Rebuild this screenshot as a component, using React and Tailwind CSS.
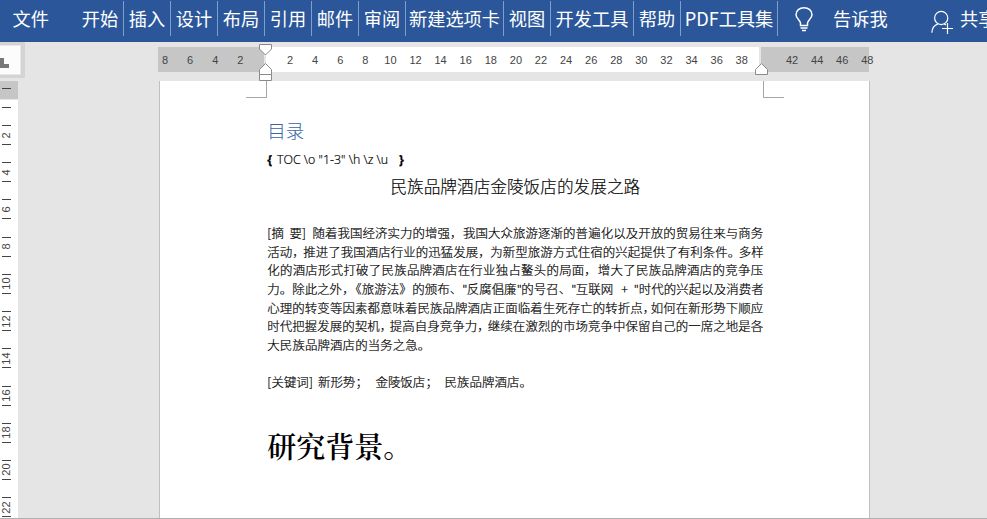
import React from 'react';

const tabs = [
  { name: '开始', w: 'w-[47px]' },
  { name: '插入', w: 'w-[47px]' },
  { name: '设计', w: 'w-[47px]' },
  { name: '布局', w: 'w-[47px]' },
  { name: '引用', w: 'w-[47px]' },
  { name: '邮件', w: 'w-[47px]' },
  { name: '审阅', w: 'w-[47px]' },
  { name: '新建选项卡', w: 'w-[98px]' },
  { name: '视图', w: 'w-[47px]' },
  { name: '开发工具', w: 'w-[83px]' },
  { name: '帮助', w: 'w-[47px]' },
  { name: 'PDF工具集', w: 'w-[97px]' },
];

const leftNums = [8, 6, 4, 2];
const midNums = [2, 4, 6, 8, 10, 12, 14, 16, 18, 20, 22, 24, 26, 28, 30, 32, 34, 36, 38];
const rightNums = [42, 44, 46, 48];
const sideNums = [2, 4, 6, 8, 10, 12, 14, 16, 18, 20, 22];

// each line is a list of [text, width in px]
const lines = [
  [['[', 4.2], ['摘', 18], ['要', 12.5], [']', 10.5], ['随着我国经济实力的增强', 137.5], ['，', 13], ['我国大众旅游逐渐的普遍化以及开放的贸易往来与商务', 300.3]],
  [['活动', 25], ['，', 11], ['推进了我国酒店行业的迅猛发展', 175], ['，', 12], ['为新型旅游方式住宿的兴起提供了有利条件', 237.5], ['。', 11], ['多样', 25]],
  [['化的酒店形式打破了民族品牌酒店在行业独占鳌头的局面', 317], ['，', 13.5], ['增大了民族品牌酒店的竞争压', 165.5]],
  [['力', 12.5], ['。', 12.5], ['除此之外', 50], ['，', 7], ['《', 12.5], ['旅游法', 37.5], ['》', 13], ['的颁布', 37.5], ['、', 12.5], ['"', 4.5], ['反腐倡廉', 50], ['"', 4.5], ['的号召', 37.5], ['、', 12.5], ['"', 4.5], ['互联网', 45.5], ['+', 12.5], ['"', 5], ['时代的兴起以及消费者', 125]],
  [['心理的转变等因素都意味着民族品牌酒店正面临着生死存亡的转折点', 375.5], ['，', 8], ['如何在新形势下顺应', 112.5]],
  [['时代把握发展的契机', 112.5], ['，', 10], ['提高自身竞争力', 87.5], ['，', 10.5], ['继续在激烈的市场竞争中保留自己的一席之地是各', 275.5]],
  [['大民族品牌酒店的当务之急', 150.5], ['。', 12.5]],
];

const keywords = [['[', 4.2], ['关键词', 37.5], [']', 9], ['新形势', 37.5], ['；', 20], ['金陵饭店', 50], ['；', 19], ['民族品牌酒店', 75], ['。', 12.5]];

function Line({ parts }) {
  return (
    <div className="flex h-[18.67px] items-center whitespace-nowrap">
      {parts.map(([text, width], i) => (
        <span
          key={i}
          className={`shrink-0 ${text.length > 4 ? '[text-align-last:justify]' : ''} ${'，；。'.includes(text) ? "[font-feature-settings:'halt']" : ''}`}
          style={{ width }}
        >
          {text}
        </span>
      ))}
    </div>
  );
}

function Ribbon() {
  return (
    <div className="flex h-[42px] shrink-0 bg-[#2b579a] pt-px text-[18.2px] leading-[34px] text-white whitespace-nowrap">
      <div className="w-[77px] shrink-0 pl-[12.5px]">文件</div>
      {tabs.map(t => (
        <div key={t.name} className={`${t.w} h-[35px] shrink-0 border-r border-[#7f9fcb] text-center`}>
          {t.name}
        </div>
      ))}
      <svg className="ml-[16px] mt-[5px] h-[26px] w-[20px] shrink-0" viewBox="0 0 20 26" fill="none" stroke="white" strokeWidth="1.5">
        <path d="M6.5 19.5V17C6.5 14.5 2 12.5 2 8.7C2 4.5 5.5 1.8 10 1.8S18 4.5 18 8.7C18 12.5 13.5 14.5 13.5 17V19.5Z" />
        <path d="M6.5 22H13.5M8 24.5H12" />
      </svg>
      <div className="ml-[19px] w-[97px] shrink-0">告诉我</div>
      <svg className="mt-[9px] h-[24px] w-[24px] shrink-0" viewBox="0 0 24 24" fill="none" stroke="white" strokeWidth="1.2">
        <circle cx="11.2" cy="8" r="6.6" />
        <path d="M1.8 22.8C2 17.8 4.5 15.2 8 13.9M14.2 13.9L16 15" />
        <path d="M17.5 13V24M12 18.5H23" />
      </svg>
      <div className="ml-[6px] shrink-0">共享</div>
    </div>
  );
}

function TopRuler() {
  return (
    <div className="relative ml-[158px] mt-[5px] flex h-[25px] w-[711px] font-['Liberation_Sans',Arial,sans-serif] text-[11px] leading-[26px] text-[#444]">
      <div className="flex w-[106px] bg-[#c6c6c6] pr-[12px]">
        <div className="-ml-[5.5px] flex">
          {leftNums.map(n => <span key={n} className="w-[25.1px] text-center">{n}</span>)}
        </div>
      </div>
      <div className="ml-[2px] flex w-[493px] bg-white pl-[11.5px]">
        {midNums.map(n => <span key={n} className="w-[25.1px] shrink-0 text-center">{n}</span>)}
      </div>
      <div className="ml-[2px] flex w-[108px] bg-[#c6c6c6] pl-[18.5px]">
        {rightNums.map(n => <span key={n} className="w-[25.1px] shrink-0 text-center">{n}</span>)}
      </div>
      <svg className="absolute -top-[4px] left-[100px] h-[40px] w-[16px]" viewBox="0 0 16 40" fill="white" stroke="#8a8a8a">
        <path d="M1.5 1.5H13.5V6L7.5 12L1.5 6Z" />
        <path d="M1.5 31.5V26.5L7.5 20.5L13.5 26.5V31.5Z" />
        <path d="M1.5 31.5H13.5V37.5H1.5Z" />
      </svg>
      <svg className="absolute top-[15px] left-[595px] h-[14px] w-[16px]" viewBox="0 0 16 14" fill="white" stroke="#8a8a8a">
        <path d="M2.5 12.5V7.5L8.5 1.5L14.5 7.5V12.5Z" />
      </svg>
    </div>
  );
}

function SideRuler() {
  return (
    <div className="w-[18px] overflow-hidden bg-white font-['Liberation_Sans',Arial,sans-serif] text-[11px] text-[#444]">
      <div className="h-[18px] bg-[#c6c6c6] pl-[2px] pt-[7px]">
        <div className="h-px w-[9px] bg-[#444]" />
      </div>
      <div className="h-[26px] border-t border-[#e5e5e5] pl-[2px] pt-[7px]">
        <div className="h-px w-[9px] bg-[#444]" />
      </div>
      {sideNums.map(n => (
        <div key={n} className="h-[37.22px] pl-[2px]">
          <div className="h-px w-[9px] bg-[#444]" />
          <div className="flex h-[18px] w-[9px] items-center justify-center">
            <span className="-rotate-90 leading-none">{n}</span>
          </div>
          <div className="h-px w-[9px] bg-[#444]" />
        </div>
      ))}
    </div>
  );
}

function Page() {
  return (
    <div className="relative ml-[141px] w-[711px] border-x border-[#c0c0c0] bg-white pl-[107.3px] text-black">
      <div className="absolute left-[86px] top-0 h-[17px] w-[21px] border-b border-r border-[#a6a6a6]" />
      <div className="absolute left-[603px] top-0 h-[17px] w-[21px] border-b border-l border-[#a6a6a6]" />
      <div className="pt-[35px] text-[18.5px] font-light leading-[28px] text-[#3a64a6]">目录</div>
      <div className="flex h-[30px] items-center pt-[2px] font-['Open_Sans','Noto_Sans',sans-serif] text-[12.4px] font-light [-webkit-text-stroke:0.2px] whitespace-pre">
        <span className="w-[9.7px] font-bold">{'{'}</span>
        <span className="w-[122px]">{'TOC \\o "1-3" \\h \\z \\u'}</span>
        <span className="font-bold">{'}'}</span>
      </div>
      <div className="h-[50px] w-[496px] text-center text-[16.67px] font-light leading-[25px] [-webkit-text-stroke:0.15px]">民族品牌酒店金陵饭店的发展之路</div>
      <div className="text-[12.45px] font-light [-webkit-text-stroke:0.2px]">
        {lines.map((parts, i) => <Line key={i} parts={parts} />)}
        <div className="h-[18.5px]" />
        <Line parts={keywords} />
      </div>
      <div className="mt-[32px] font-['Noto_Serif_CJK_SC','Noto_Sans_CJK_SC',serif] text-[29px] font-semibold leading-[44px]">研究背景。</div>
    </div>
  );
}

export default function App() {
  return (
    <div className="flex h-[519px] w-[987px] flex-col overflow-hidden border-b border-[#b0b0b0] bg-[#e5e5e5] font-['Noto_Sans_CJK_SC',sans-serif]">
      <Ribbon />
      <div className="flex h-[39px] shrink-0">
        <div className="-mr-[25px] h-[36px] w-[25px] bg-[#d4d4d4] pt-[3px]">
          <div className="flex h-[30px] w-[21px] items-center border border-l-0 border-[#e8e8e8] bg-[#fcfcfc]">
            <div className="mt-[5px] h-[10px] w-[9px]">
              <svg viewBox="0 0 9 10" className="h-[10px] w-[9px]"><path d="M0 0H4V6H9V10H0Z" fill="#777" /></svg>
            </div>
          </div>
        </div>
        <TopRuler />
      </div>
      <div className="flex min-h-0 flex-1">
        <SideRuler />
        <Page />
      </div>
    </div>
  );
}
